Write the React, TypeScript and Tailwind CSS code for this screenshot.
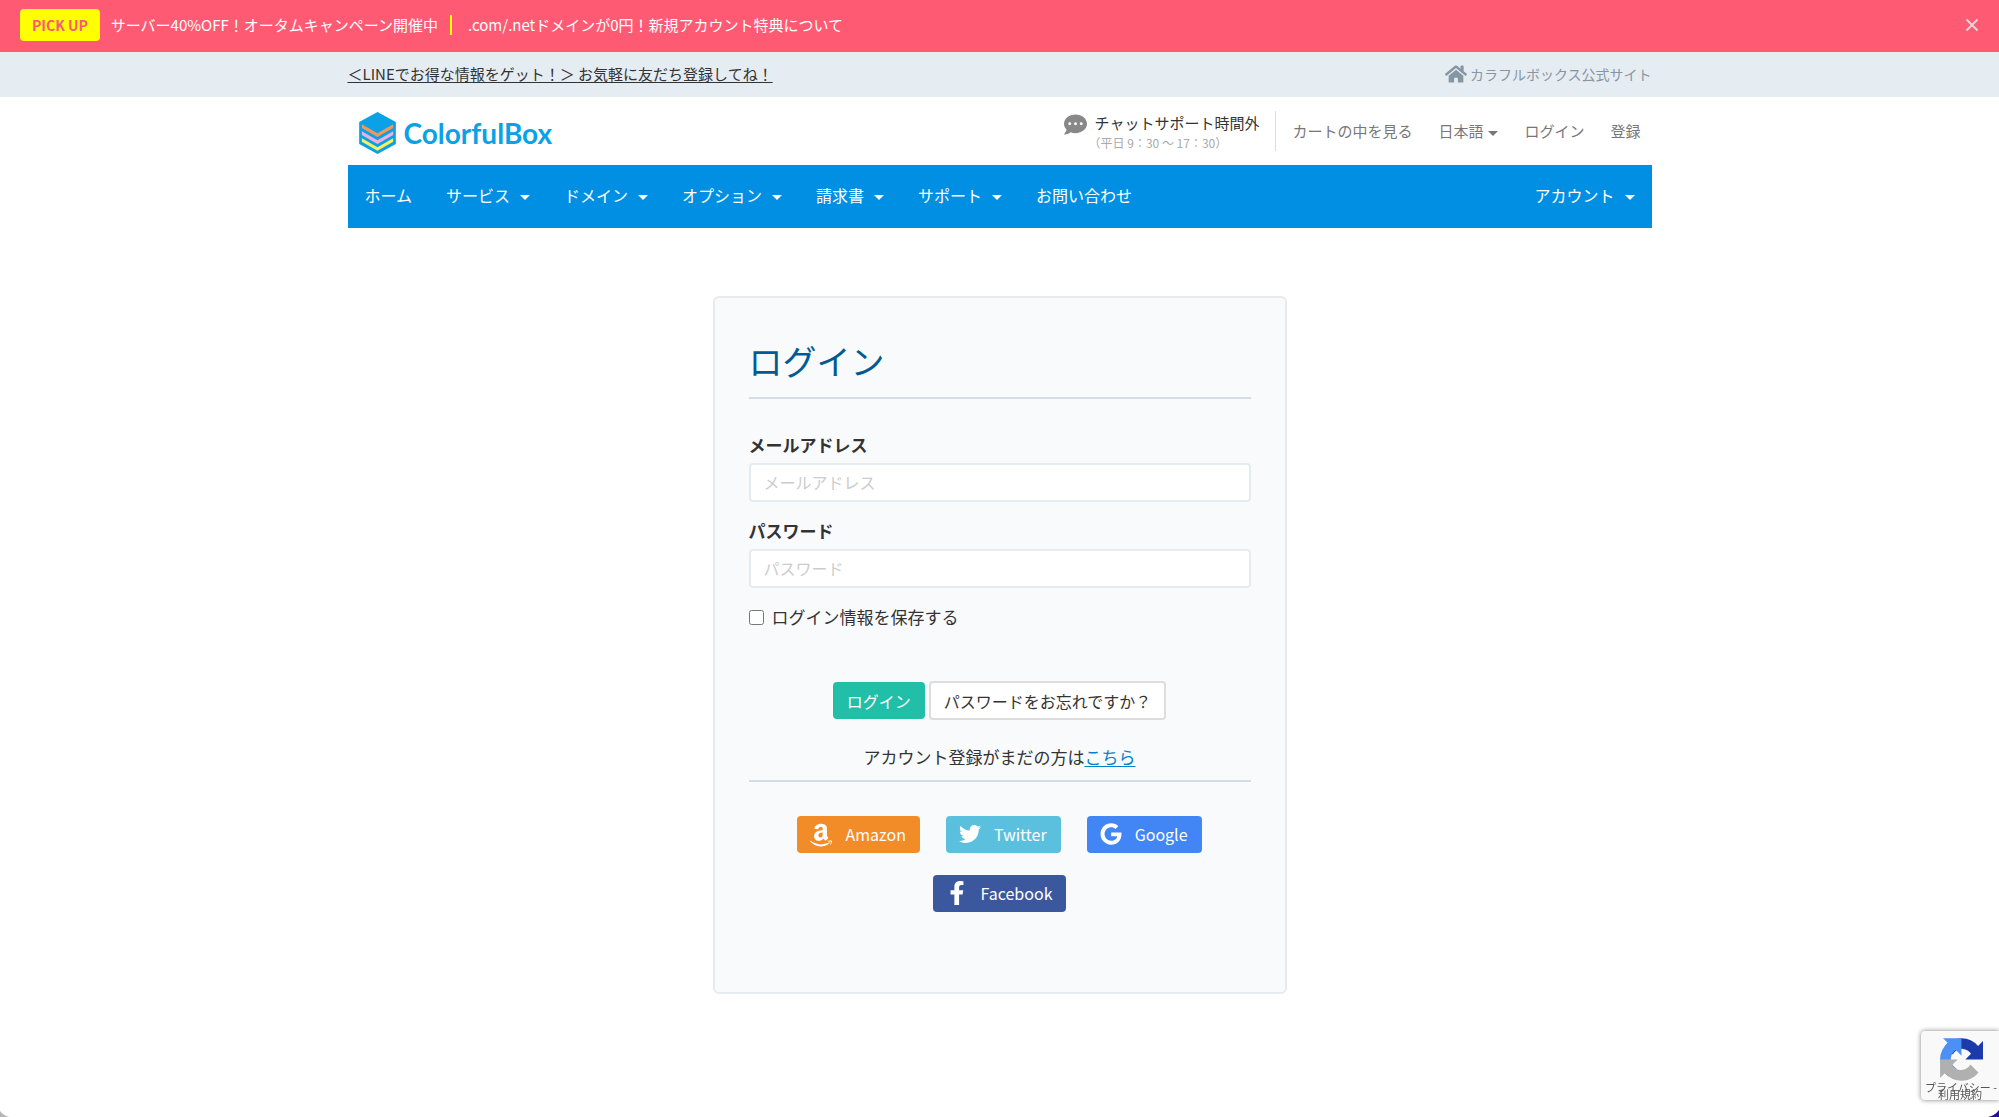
import React, { useState } from 'react';
import { FaAmazon, FaCommentDots, FaFacebookF, FaGoogle, FaHome, FaTwitter } from 'react-icons/fa';

const navItems = [
  { label: 'ホーム', menu: false },
  { label: 'サービス', menu: true },
  { label: 'ドメイン', menu: true },
  { label: 'オプション', menu: true },
  { label: '請求書', menu: true },
  { label: 'サポート', menu: true },
  { label: 'お問い合わせ', menu: false },
];

const socials = [
  { label: 'Amazon', icon: <FaAmazon className="size-7 shrink-0 pt-0.5" />, color: 'bg-[#f28c28]' },
  { label: 'Twitter', icon: <FaTwitter className="size-[22px]" />, color: 'bg-[#5bc0de]' },
  { label: 'Google', icon: <FaGoogle className="size-[22px]" />, color: 'bg-[#4285f4]' },
  { label: 'Facebook', icon: <FaFacebookF className="size-6" />, color: 'bg-[#3b589e]' },
];

function Caret() {
  return <span className="mt-1 h-0 w-0 border-x-5 border-t-5 border-x-transparent border-t-current" />;
}

function Logo() {
  return (
    <a href="#" className="flex items-center gap-2 pt-1 pl-[11px] text-[#0ba1e6]">
      <svg viewBox="0 0 110 126" className="h-[42px] w-[37px]" aria-hidden="true">
        <path d="M55 0 110 30V96L55 126 0 96V30Z" fill="#0ba1e6" />
        <path d="M8 37 55 64 102 37V48L55 75 8 48Z" fill="#f0975a" />
        <path d="M8 58 55 85 102 58V69L55 96 8 69Z" fill="#e9b3dc" />
        <path d="M8 79 55 106 102 79V89L55 116 8 89Z" fill="#fcf05a" />
      </svg>
      <span className="font-['Lato',sans-serif] text-[28px] leading-8 font-bold">ColorfulBox</span>
    </a>
  );
}

function TopBars() {
  return (
    <>
      {/* Campaign bar */}
      <div className="flex h-[52px] items-center bg-[#ff5a73] px-5 pb-0.5 text-[15px] text-white">
        <span className="mr-[11px] rounded bg-[#ffff00] px-3 text-sm leading-8 font-bold text-[#ff5a73]">PICK UP</span>
        <a href="#">サーバー40%OFF！オータムキャンペーン開催中</a>
        <span className="mr-4 ml-3 h-5 w-0.5 bg-[#ffff00]" />
        <a href="#">.com/.netドメインが0円！新規アカウント特典について</a>
        <button aria-label="閉じる" className="ml-auto text-[#e3d5d8]">
          <svg viewBox="0 0 14 14" className="size-[14px]" stroke="currentColor" strokeWidth="2">
            <path d="M1.5 1.5 12.5 12.5M12.5 1.5 1.5 12.5" />
          </svg>
        </button>
      </div>

      {/* Info bar */}
      <div className="bg-[#e5ecf2]">
        <div className="mx-auto flex h-[45px] max-w-[1304px] items-center justify-between">
          <a href="#" className="text-[15px] underline underline-offset-2">
            ＜LINEでお得な情報をゲット！＞ お気軽に友だち登録してね！
          </a>
          <a href="#" className="flex items-center gap-[3px] pb-0.5 text-sm text-[#8796a3]">
            <FaHome className="size-[22px]" />
            カラフルボックス公式サイト
          </a>
        </div>
      </div>
    </>
  );
}

function Header() {
  return (
    <header className="mx-auto max-w-[1304px]">
      <div className="flex h-[68px] items-center justify-between">
        <Logo />
        <div className="flex items-center pr-[11px] text-[15px] text-[#777]">
          <div className="flex h-10 items-start border-r border-[#ddd] pr-4">
            <FaCommentDots className="mt-0.5 mr-2 size-[23px] text-[#888]" />
            <div>
              <p className="leading-6 text-[#333]">チャットサポート時間外</p>
              <p className="text-xs leading-4 text-[#aaa] [text-spacing-trim:trim-start]">（平日 9：30 〜 17：30）</p>
            </div>
          </div>
          <div className="flex items-center gap-[26px] pl-4">
            <a href="#">カートの中を見る</a>
            <button className="flex items-center gap-[5px]">
              日本語
              <Caret />
            </button>
            <a href="#">ログイン</a>
            <a href="#">登録</a>
          </div>
        </div>
      </div>

      <nav className="flex h-[63px] items-center bg-[#008fe3] pb-[3px] text-base text-white">
        {navItems.map((item) => (
          <a key={item.label} href="#" className="flex items-center gap-[10px] px-[17px]">
            {item.label}
            {item.menu && <Caret />}
          </a>
        ))}
        <a href="#" className="ml-auto flex items-center gap-[10px] px-[17px]">
          アカウント
          <Caret />
        </a>
      </nav>
    </header>
  );
}

function LoginCard() {
  const [email, setEmail] = useState('');
  const [password, setPassword] = useState('');
  const [remember, setRemember] = useState(false);

  const inputClass =
    'block h-[39px] w-full rounded border-2 border-[#e4ecf3] bg-white px-[13px] pb-0.5 text-base placeholder:text-[#ccc]';

  return (
    <main className="mx-auto mt-[68px] max-w-[574px] rounded-md border-2 border-[#e6ebef] bg-[#f9fafc] px-[34px] pt-[34px] pb-20">
      <h1 className="border-b-2 border-[#d5dce4] pb-[7px] text-[34px] leading-[58px] text-[#005b94]">ログイン</h1>

      <form onSubmit={(e) => e.preventDefault()} className="text-[17px] leading-[26px]">
        <label htmlFor="email" className="mt-[33px] mb-[5px] block font-bold">
          メールアドレス
        </label>
        <input
          id="email"
          type="email"
          value={email}
          onChange={(e) => setEmail(e.target.value)}
          placeholder="メールアドレス"
          className={inputClass}
        />
        <label htmlFor="password" className="mt-4 mb-[5px] block font-bold">
          パスワード
        </label>
        <input
          id="password"
          type="password"
          value={password}
          onChange={(e) => setPassword(e.target.value)}
          placeholder="パスワード"
          className={inputClass}
        />
        <label className="mt-4 flex items-center gap-2">
          <input
            type="checkbox"
            checked={remember}
            onChange={(e) => setRemember(e.target.checked)}
            className="size-[15px]"
          />
          ログイン情報を保存する
        </label>

        <div className="mt-[51px] flex items-center justify-center gap-1 text-base">
          <button type="submit" className="h-[37px] rounded bg-[#21bfa8] px-[14px] text-white">
            ログイン
          </button>
          <a href="#" className="flex h-[39px] items-center rounded border-2 border-[#ddd] bg-white px-[13px]">
            パスワードをお忘れですか？
          </a>
        </div>
        <p className="mt-6 border-b-2 border-[#d5dce4] pb-[10px] text-center">
          アカウント登録がまだの方は
          <a href="#" className="text-[#0083cc] underline underline-offset-2">
            こちら
          </a>
        </p>
      </form>

      <div className="mt-[34px] flex flex-wrap justify-center gap-x-[26px] gap-y-[22px] px-8">
        {socials.map((s) => (
          <button
            key={s.label}
            className={`flex h-[37px] items-center gap-3 rounded pr-[14px] pb-px pl-3 text-base text-white ${s.color}`}
          >
            <span className="flex w-6 justify-center">{s.icon}</span>
            {s.label}
          </button>
        ))}
      </div>
    </main>
  );
}

function RecaptchaBadge() {
  return (
    <div className="fixed right-0 bottom-[17px] flex h-[69px] w-[78px] flex-col rounded-l-sm bg-[#f9f9f9] shadow-[0_0_5px_#808080]">
      <svg viewBox="0 0 64 64" className="mt-[7px] ml-[19px] h-[43px] w-[43px] shrink-0" aria-hidden="true">
        <path
          d="M64 31.955a33 33 0 0 0-.014-.916V4.5l-7.337 7.337A31.95 31.95 0 0 0 31.995.2 31.95 31.95 0 0 0 6.9 12.47l12.027 12.154a15.94 15.94 0 0 1 4.87-5.465c2.1-1.64 5.077-2.98 9.178-2.98.495 0 .878.058 1.159.167 5.081.401 9.485 3.205 12.078 7.275l-8.513 8.513c10.783-.042 22.964-.067 26.301-.18"
          fill="#1c3aa9"
        />
        <path
          d="M31.862.2q-.46.004-.916.014H4.5l7.244 7.337A31.95 31.95 0 0 0 .107 32.205 31.95 31.95 0 0 0 12.377 57.3l12.154-12.027a15.94 15.94 0 0 1-5.465-4.87c-1.64-2.1-2.98-5.077-2.98-9.178 0-.495.058-.878.167-1.159.401-5.081 3.205-9.485 7.275-12.078l8.513 8.513C32 15.718 31.975 3.537 31.862.2"
          fill="#4a90f5"
        />
        <path
          d="M.107 32.03q.004.46.014.916v26.539l7.337-7.337a31.95 31.95 0 0 0 24.654 11.637c10.227 0 19.313-4.819 25.095-12.27L45.18 39.361a15.94 15.94 0 0 1-4.87 5.465c-2.1 1.64-5.077 2.98-9.178 2.98-.495 0-.878-.058-1.159-.167-5.081-.401-9.485-3.205-12.078-7.275l8.513-8.513c-10.783.042-22.964.067-26.301.18"
          fill="#b0b0b0"
        />
      </svg>
      <div className="pt-[3px] pl-1 text-[11px] leading-[7px] whitespace-nowrap text-[#555]">
        <p>
          <a href="#">プライバシー</a> -
        </p>
        <p className="pl-[13px]">
          <a href="#">利用規約</a>
        </p>
      </div>
    </div>
  );
}

export default function App() {
  return (
    <div className="min-h-screen bg-white font-['Noto_Sans_CJK_JP',sans-serif] text-[#333]">
      <TopBars />
      <Header />
      <LoginCard />
      <RecaptchaBadge />

      {/* Rounded window corners */}
      <svg viewBox="0 0 9 6" className="fixed bottom-0 left-0 h-[6px] w-[9px]" aria-hidden="true">
        <path d="M0 0Q3 4.5 9 6H0Z" fill="#b5b5b5" />
      </svg>
      <svg viewBox="0 0 11 7" className="fixed right-0 bottom-0 h-[7px] w-[11px]" aria-hidden="true">
        <path d="M11 0Q7 5.5 0 7H11Z" fill="#2d0d9c" />
      </svg>
    </div>
  );
}
